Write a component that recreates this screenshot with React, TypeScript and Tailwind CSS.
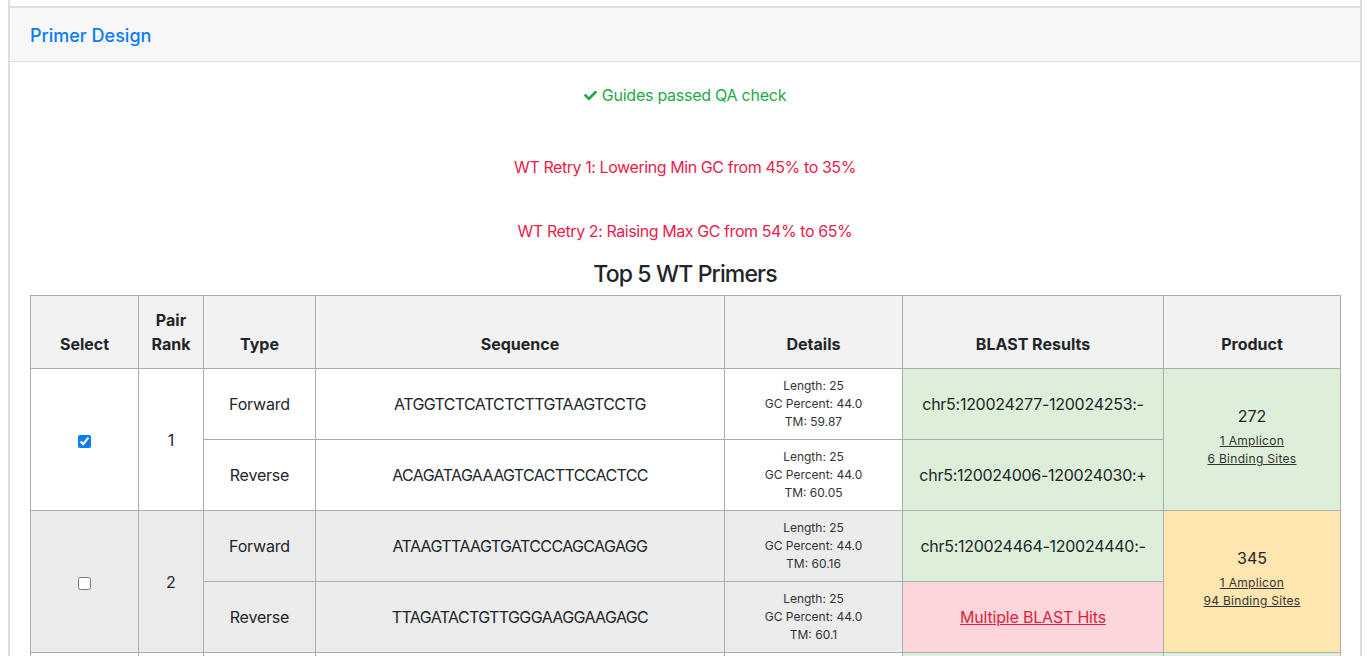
import React from "react";
import { FaCheck } from "react-icons/fa";

const font = { fontFamily: "Inter, 'Noto Sans', sans-serif" };

type Primer = { type: string; seq: string; len: number; gc: string; tm: string; blast: string; multi?: boolean };
type Pair = { rank: number; checked: boolean; product: number; amplicon: string; sites: string; productBg: string; primers: Primer[] };

const pairs: Pair[] = [
  {
    rank: 1,
    checked: true,
    product: 272,
    amplicon: "1 Amplicon",
    sites: "6 Binding Sites",
    productBg: "bg-[#ddefd9]",
    primers: [
      { type: "Forward", seq: "ATGGTCTCATCTCTTGTAAGTCCTG", len: 25, gc: "44.0", tm: "59.87", blast: "chr5:120024277-120024253:-" },
      { type: "Reverse", seq: "ACAGATAGAAAGTCACTTCCACTCC", len: 25, gc: "44.0", tm: "60.05", blast: "chr5:120024006-120024030:+" },
    ],
  },
  {
    rank: 2,
    checked: false,
    product: 345,
    amplicon: "1 Amplicon",
    sites: "94 Binding Sites",
    productBg: "bg-[#fee6ae]",
    primers: [
      { type: "Forward", seq: "ATAAGTTAAGTGATCCCAGCAGAGG", len: 25, gc: "44.0", tm: "60.16", blast: "chr5:120024464-120024440:-" },
      { type: "Reverse", seq: "TTAGATACTGTTGGGAAGGAAGAGC", len: 25, gc: "44.0", tm: "60.1", blast: "", multi: true },
    ],
  },
  {
    rank: 3,
    checked: false,
    product: 298,
    amplicon: "1 Amplicon",
    sites: "6 Binding Sites",
    productBg: "bg-[#ddefd9]",
    primers: [
      { type: "Forward", seq: "ATGGTCTCATCTCTTGTAAGTCCTG", len: 25, gc: "44.0", tm: "59.87", blast: "chr5:120024277-120024253:-" },
      { type: "Reverse", seq: "GCTCTTCCTTCCCAACAGTATCTAA", len: 25, gc: "44.0", tm: "60.1", blast: "chr5:120023980-120024004:+" },
    ],
  },
];

const cell = "border border-[#adadad] px-[12px] py-[8px] text-center align-middle";
const th = "border border-[#adadad] px-[12px] pt-[12px] pb-[12px] text-center align-bottom font-bold text-[16px] leading-[24px] bg-[#f2f2f2]";

export default function App() {
  return (
    <div className="h-[656px] overflow-hidden bg-white text-[#212529]" style={font}>
      <div className="mx-[8px] border-x-2 border-[#dedede] h-[700px]">
        <div className="h-[6px]" />
        <div className="h-[56px] border-t-2 border-b border-[#dedede] bg-[#f7f7f7] flex items-center px-[20px] pt-[1px]">
          <span className="text-[18px] font-medium text-[#0a7cf5]">Primer Design</span>
        </div>
        <div className="px-[20px] pt-[21px]">
          <div className="flex items-center justify-center gap-[5px] text-[16px] leading-[24px] text-[#1fa84a] tracking-[-0.25px]">
            <FaCheck className="w-[13px] h-[13px]" />
            <span>Guides passed QA check</span>
          </div>
          <div className="mt-[48px] text-center text-[16px] leading-[24px] text-[#e8214b] tracking-[-0.42px]">
            WT Retry 1: Lowering Min GC from 45% to 35%
          </div>
          <div className="mt-[40px] text-center text-[16px] leading-[24px] text-[#e8214b] tracking-[-0.42px]">
            WT Retry 2: Raising Max GC from 54% to 65%
          </div>
          <div className="mt-[17px] text-center text-[23px] leading-[29px] font-medium tracking-[-0.85px]">Top 5 WT Primers</div>
          <table className="mt-[6px] w-full table-fixed border-collapse text-[16px] leading-[24px]">
            <colgroup>
              <col className="w-[108px]" />
              <col className="w-[65px]" />
              <col className="w-[112px]" />
              <col className="w-[409px]" />
              <col className="w-[178px]" />
              <col className="w-[261px]" />
              <col className="w-[177px]" />
            </colgroup>
            <thead>
              <tr>
                <th className={th}>Select</th>
                <th className={th}>Pair Rank</th>
                <th className={th}>Type</th>
                <th className={th}>Sequence</th>
                <th className={th}>Details</th>
                <th className={th}>BLAST Results</th>
                <th className={th}>Product</th>
              </tr>
            </thead>
            <tbody>
              {pairs.map((p) => {
                const rowBg = p.rank % 2 === 0 ? "bg-[#ececec]" : "bg-white";
                return p.primers.map((pr, i) => (
                  <tr key={`${p.rank}-${i}`} className={rowBg}>
                    {i === 0 && (
                      <td rowSpan={2} className={cell}>
                        <input
                          type="checkbox"
                          defaultChecked={p.checked}
                          className="w-[13px] h-[13px] align-middle accent-[#0a7cf5]"
                        />
                      </td>
                    )}
                    {i === 0 && (
                      <td rowSpan={2} className={cell}>
                        {p.rank}
                      </td>
                    )}
                    <td className={`${cell} tracking-[-0.2px]`}>{pr.type}</td>
                    <td className={`${cell} tracking-[-0.62px]`}>{pr.seq}</td>
                    <td className={`${cell} text-[12px] leading-[18px] text-[#333]`}>
                      <div>Length: {pr.len}</div>
                      <div>GC Percent: {pr.gc}</div>
                      <div>TM: {pr.tm}</div>
                    </td>
                    {pr.multi ? (
                      <td className={`${cell} bg-[#fdd6db]`}>
                        <a href="#" className="underline text-[#dc1f3c] tracking-[-0.2px]">
                          Multiple BLAST Hits
                        </a>
                      </td>
                    ) : (
                      <td className={`${cell} bg-[#ddefd9] tracking-[-0.27px]`}>{pr.blast}</td>
                    )}
                    {i === 0 && (
                      <td rowSpan={2} className={`${cell} ${p.productBg}`}>
                        <div className="leading-[24px]">{p.product}</div>
                        <div className="mt-[4px] mb-[8px] text-[12px] leading-[18px] tracking-[0.3px]">
                          <div>
                            <a href="#" className="underline text-[#333]">{p.amplicon}</a>
                          </div>
                          <div>
                            <a href="#" className="underline text-[#333]">{p.sites}</a>
                          </div>
                        </div>
                      </td>
                    )}
                  </tr>
                ));
              })}
            </tbody>
          </table>
        </div>
      </div>
    </div>
  );
}
